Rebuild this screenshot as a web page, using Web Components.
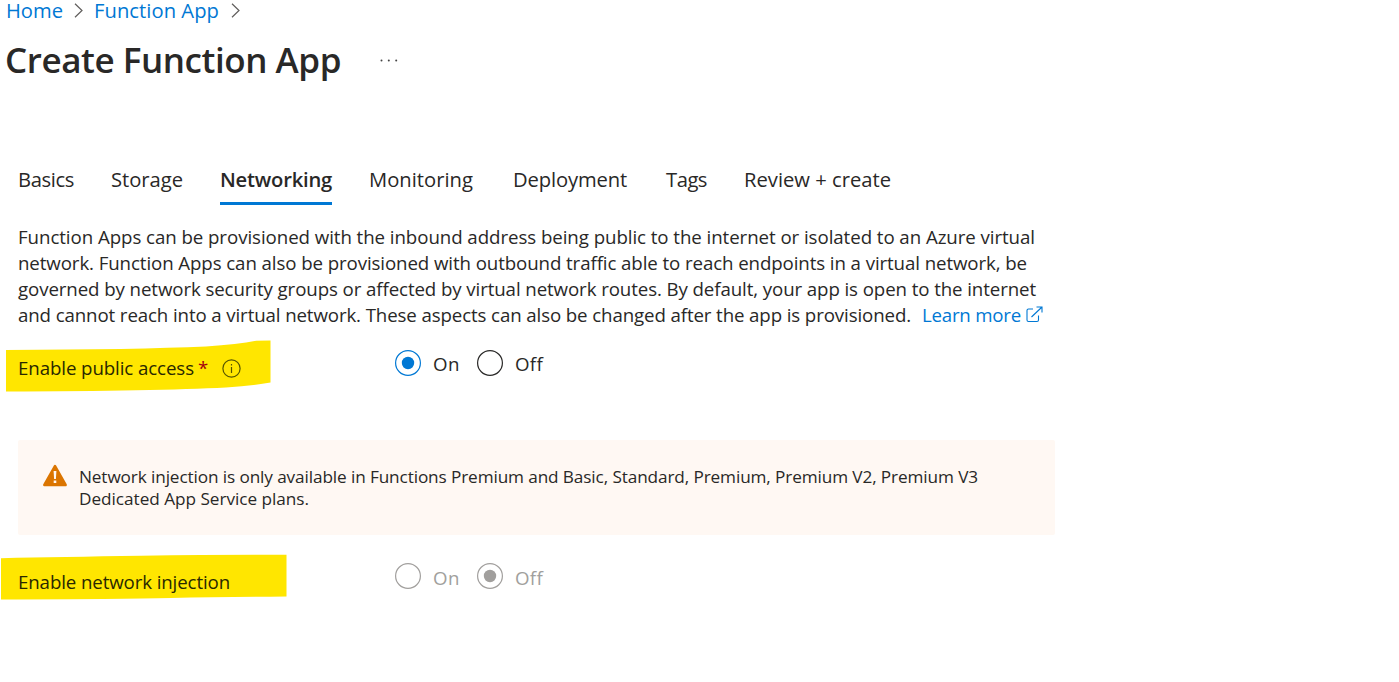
<!DOCTYPE html>
<html lang="en">
<head>
<meta charset="utf-8">
<title>Create Function App</title>
<style>
  body { margin: 0; background: #fff; color: #292827; font-family: "Open Sans", "Noto Sans", sans-serif; }
</style>
</head>
<body>
<function-app-page></function-app-page>

<script>
const define = (name, html, setup) => {
  const template = document.createElement('template');
  template.innerHTML = html;
  customElements.define(name, class extends HTMLElement {
    connectedCallback() {
      if (this.shadowRoot) return;
      this.attachShadow({ mode: 'open' }).appendChild(template.content.cloneNode(true));
      if (setup) setup.call(this, this.shadowRoot);
    }
  });
};

/* One line of text, tracked so that it fills the given measure. */
define('text-line', `
  <style>
    :host { display: block; white-space: nowrap; }
    span { display: inline-block; }
  </style>
  <span><slot></slot></span>`, function (root) {
  const span = root.querySelector('span');
  const measure = parseFloat(this.getAttribute('measure'));
  this.style.width = measure + 'px';
  const count = this.textContent.length;
  span.style.letterSpacing = ((measure - span.getBoundingClientRect().width) / count) + 'px';
});

define('crumb-trail', `
  <style>
    :host { display: flex; align-items: flex-start; height: 20px; padding-left: 6px; font-size: 20.2px; line-height: 20px; color: #0078d4; }
    svg { display: block; margin-top: 3px; fill: none; stroke: #605e5c; stroke-width: 1.2; }
    .a { margin-left: 11px; margin-right: 11px; }
    .b { margin-left: 12px; }
  </style>
  <text-line measure="57">Home</text-line>
  <svg class="a" width="9" height="15" viewBox="0 0 9 15"><path d="M1 .7 8 7.5 1 14.3"/></svg>
  <text-line measure="125">Function App</text-line>
  <svg class="b" width="9" height="15" viewBox="0 0 9 15"><path d="M1 .7 8 7.5 1 14.3"/></svg>`);

define('page-title', `
  <style>
    :host { display: flex; margin-top: 20px; height: 40px; padding-left: 5px; font-size: 35px; line-height: 40px; font-weight: 600; }
    svg { display: block; margin: 19px 0 0 39px; fill: #444; }
  </style>
  <slot></slot>
  <svg width="18" height="3" viewBox="0 0 18 3"><circle cx="1.5" cy="1.4" r="1"/><circle cx="8.8" cy="1.4" r="1"/><circle cx="16.2" cy="1.4" r="1"/></svg>`);

define('tab-item', `
  <style>
    :host { display: block; box-sizing: border-box; height: 40px; line-height: 28px; border-bottom: 3px solid transparent; }
    :host([selected]) { border-color: #0078d4; font-weight: 600; }
  </style>
  <slot></slot>`);

define('tab-list', `
  <style>
    :host { display: grid; grid-template-columns: 93px 109px 149px 144px 153px 78px auto; justify-items: start; margin-top: 85px; padding-left: 18px; font-size: 20.2px; }
  </style>
  <tab-item><text-line measure="56">Basics</text-line></tab-item>
  <tab-item><text-line measure="72">Storage</text-line></tab-item>
  <tab-item selected><text-line measure="112">Networking</text-line></tab-item>
  <tab-item><text-line measure="104">Monitoring</text-line></tab-item>
  <tab-item><text-line measure="114">Deployment</text-line></tab-item>
  <tab-item><text-line measure="41">Tags</text-line></tab-item>
  <tab-item><text-line measure="147">Review + create</text-line></tab-item>`);

define('intro-text', `
  <style>
    :host { display: block; margin: 19px 0 0 18px; font-size: 18.7px; line-height: 26px; }
    div { display: flex; }
    .link { color: #0078d4; margin-left: 11px; }
    svg { display: block; margin: 4px 0 0 5px; fill: none; stroke: #0078d4; stroke-width: 1.1; }
  </style>
  <text-line measure="1017">Function Apps can be provisioned with the inbound address being public to the internet or isolated to an Azure virtual</text-line>
  <text-line measure="1009">network. Function Apps can also be provisioned with outbound traffic able to reach endpoints in a virtual network, be</text-line>
  <text-line measure="1018">governed by network security groups or affected by virtual network routes. By default, your app is open to the internet</text-line>
  <div>
    <text-line measure="893">and cannot reach into a virtual network. These aspects can also be changed after the app is provisioned.</text-line>
    <text-line class="link" measure="99">Learn more</text-line>
    <svg width="17" height="17" viewBox="0 0 17 17"><path d="M7 3H2.500Q1 3 1 4.500V14Q1 15.500 2.500 15.500H11Q12.500 15.500 12.500 14V9.500M5.500 11 16 1M10.500 1H16V6.500"/></svg>
  </div>`);

define('radio-option', `
  <style>
    :host { display: flex; align-items: flex-start; gap: 12px; color: inherit; }
    svg { display: block; fill: none; stroke: currentColor; stroke-width: 1.2; margin-top: var(--dot-shift, 0); }
    .dot { display: none; fill: currentColor; stroke: none; }
    :host([checked]) .dot { display: block; }
    :host([checked]:not([disabled])) svg { color: #0078d4; }
    :host([disabled]) { color: #a19f9d; }
    .label { margin-top: 1px; }
  </style>
  <svg width="26" height="26" viewBox="0 0 26 26"><circle cx="13" cy="13" r="12.4"/><circle class="dot" cx="13" cy="13" r="6.2"/></svg>
  <div class="label"><slot></slot></div>`);

define('form-row', `
  <style>
    :host { display: grid; grid-template-columns: 377px 82px auto; align-items: start; padding-left: 18px; font-size: 18.7px; line-height: 26px; }
    .label { position: relative; display: flex; padding-top: 5px; color: #292800; }
    ::slotted(.mark) { position: absolute; z-index: -1; }
  </style>
  <div class="label"><slot name="mark"></slot><slot name="label"></slot></div>
  <slot></slot>`);

define('info-icon', `
  <style>:host { display: block; margin: 4px 0 0 14px; } svg { display: block; fill: none; stroke: #555500; stroke-width: 1.2; }</style>
  <svg width="19" height="19" viewBox="0 0 19 19"><circle cx="9.500" cy="9.500" r="8.600"/><path d="M9.500 8v6M9.500 5v1.500"/></svg>`);

define('warning-box', `
  <style>
    :host { display: flex; box-sizing: border-box; width: 1037px; height: 95px; margin: 0 0 0 18px; padding: 26px 24px; border-radius: 2px; background: #fff8f3; color: #292827; font-size: 17.2px; line-height: 22px; }
    svg { display: block; flex: none; margin: -2px 11px 0 0; }
  </style>
  <svg width="26" height="24" viewBox="0 0 26 24"><path d="M13 2.200 23.600 21H2.400Z" fill="#db7500" stroke="#db7500" stroke-width="2.600" stroke-linejoin="round"/><path d="M11.600 7h2.800l-.5 8h-1.800zM11.700 16.500h2.600v2.500h-2.600z" fill="#fff8f3"/></svg>
  <div><slot></slot></div>`);

define('function-app-page', `
  <style>
    :host { display: block; height: 682px; position: relative; z-index: 0; }
    .public { margin-top: 22px; height: 90px; }
    .injection { margin-top: 29px; --dot-shift: -1px; }
    .star { color: #a4000f; margin-left: 4px; }
    .mark { fill: #ffe600; }
    .public .mark { left: -12px; top: -10px; }
    .injection .mark { left: -17px; top: -10px; }
  </style>
  <crumb-trail></crumb-trail>
  <page-title><text-line measure="336">Create Function App</text-line></page-title>
  <tab-list></tab-list>
  <intro-text></intro-text>
  <form-row class="public">
    <svg class="mark" slot="mark" width="265" height="52" viewBox="0 0 265 52"><path d="M0 10Q130 9.500 200 6.500Q232 4.500 250 .8L264.500.5V42.500Q245 46 220 47.500Q150 51 0 51.500Z"/></svg>
    <text-line slot="label" measure="176">Enable public access</text-line>
    <text-line slot="label" class="star" measure="10">*</text-line>
    <info-icon slot="label"></info-icon>
    <radio-option checked><text-line measure="27">On</text-line></radio-option>
    <radio-option><text-line measure="28">Off</text-line></radio-option>
  </form-row>
  <warning-box>
    <text-line measure="899">Network injection is only available in Functions Premium and Basic, Standard, Premium, Premium V2, Premium V3</text-line>
    <text-line measure="230">Dedicated App Service plans.</text-line>
  </warning-box>
  <form-row class="injection">
    <svg class="mark" slot="mark" width="286" height="46" viewBox="0 0 286 46"><path d="M0 4.200Q60 3 140 1.800T285.500.8V42.500Q220 43 170 44T0 45.500Z"/></svg>
    <text-line slot="label" measure="212">Enable network injection</text-line>
    <radio-option disabled><text-line measure="27">On</text-line></radio-option>
    <radio-option checked disabled><text-line measure="28">Off</text-line></radio-option>
  </form-row>`);
</script>
</body>
</html>
